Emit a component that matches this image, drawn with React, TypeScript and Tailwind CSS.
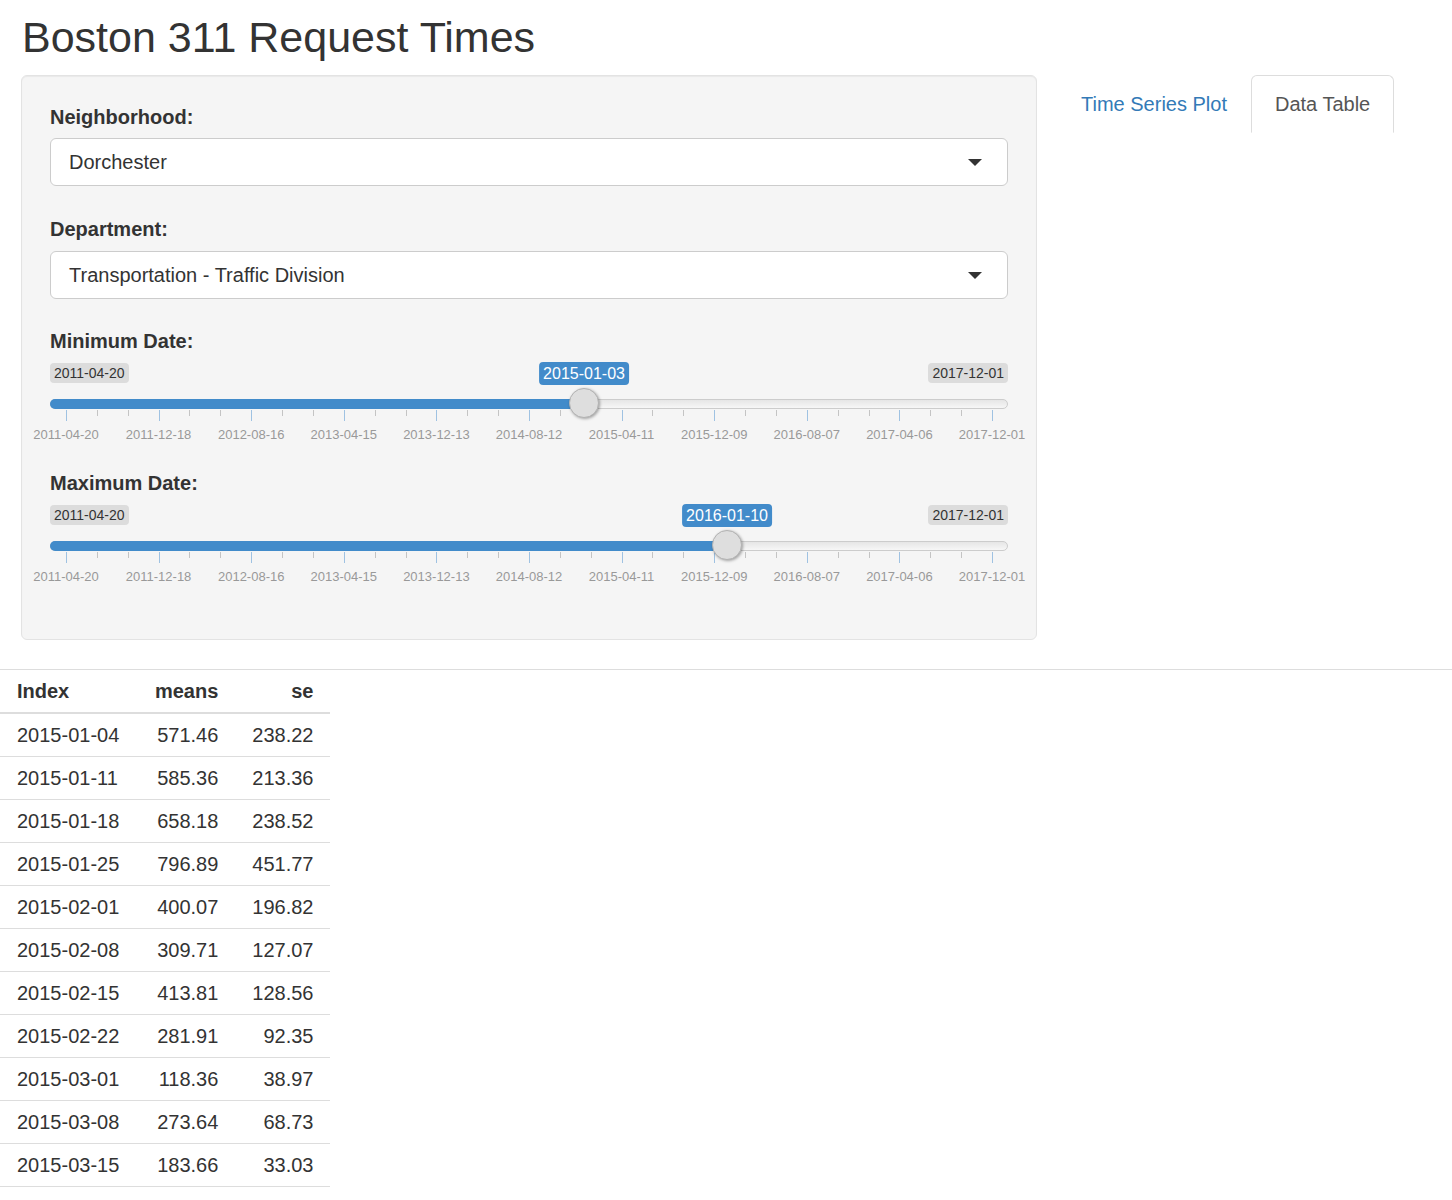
import React from 'react';

const gridLabels = [
  '2011-04-20',
  '2011-12-18',
  '2012-08-16',
  '2013-04-15',
  '2013-12-13',
  '2014-08-12',
  '2015-04-11',
  '2015-12-09',
  '2016-08-07',
  '2017-04-06',
  '2017-12-01',
];

const rows = [
  ['2015-01-04', '571.46', '238.22'],
  ['2015-01-11', '585.36', '213.36'],
  ['2015-01-18', '658.18', '238.52'],
  ['2015-01-25', '796.89', '451.77'],
  ['2015-02-01', '400.07', '196.82'],
  ['2015-02-08', '309.71', '127.07'],
  ['2015-02-15', '413.81', '128.56'],
  ['2015-02-22', '281.91', '92.35'],
  ['2015-03-01', '118.36', '38.97'],
  ['2015-03-08', '273.64', '68.73'],
  ['2015-03-15', '183.66', '33.03'],
  ['2015-03-22', '416.73', '80.18'],
];

// grid spans x = 16..942 inside the 957px slider
const GRID_START = 16;
const GRID_WIDTH = 926;

function SelectBox({ value }: { value: string }) {
  return (
    <div className="flex items-center justify-between h-[48px] bg-white border border-[#cccccc] rounded-[6px] pl-[18px] pr-[25px]">
      <span className="text-[20px] leading-[28px] text-[#333]">{value}</span>
      <span className="w-0 h-0 border-x-[7px] border-x-transparent border-t-[7px] border-t-[#333]" />
    </div>
  );
}

function DateSlider({ value, handleX }: { value: string; handleX: number }) {
  const ticks = Array.from({ length: 31 }, (_, i) => i);
  return (
    <div className="relative h-[89px] w-full">
      {/* min / max labels */}
      <div className="flex justify-between pt-[8px]">
        <span className="h-[20px] leading-[20px] px-[4px] rounded-[4px] bg-black/10 text-[14px] text-[#333]">
          2011-04-20
        </span>
        <span className="h-[20px] leading-[20px] px-[4px] rounded-[4px] bg-black/10 text-[14px] text-[#333]">
          2017-12-01
        </span>
      </div>

      {/* track */}
      <div className="relative mt-[16px] h-[10px] rounded-full border border-[#cccccc] bg-[linear-gradient(to_bottom,#dddddd_-50%,#ffffff_150%)]">
        <div
          className="absolute -left-px -top-px h-[10px] rounded-l-full bg-[#428bca]"
          style={{ width: handleX }}
        />
      </div>

      {/* grid ticks */}
      {ticks.map((i) => {
        const big = i % 3 === 0;
        return (
          <span
            key={i}
            className={
              big
                ? 'absolute top-[55px] w-px h-[11px] bg-[#9fc2e2]'
                : 'absolute top-[55px] w-px h-[6px] bg-[#c4c4c4]'
            }
            style={{ left: GRID_START + (i * GRID_WIDTH) / 30 }}
          />
        );
      })}
      {gridLabels.map((label, i) => (
        <span
          key={label}
          className="absolute top-[72px] h-[16px] leading-[16px] -translate-x-1/2 text-[13px] text-[#999] whitespace-nowrap"
          style={{ left: GRID_START + (i * GRID_WIDTH) / 10 }}
        >
          {label}
        </span>
      ))}

      {/* value label + handle */}
      <span
        className="absolute top-[7px] h-[23px] leading-[23px] px-[4px] -translate-x-1/2 rounded-[4px] bg-[#428bca] text-white text-[16px] whitespace-nowrap"
        style={{ left: handleX }}
      >
        {value}
      </span>
      <span
        className="absolute top-[33px] w-[30px] h-[30px] -ml-[15px] rounded-full bg-[#dedede] border border-[#b3b3b3] shadow-[1px_1px_3px_rgba(0,0,0,0.35)]"
        style={{ left: handleX }}
      />
    </div>
  );
}

export default function App() {
  return (
    <div className="min-h-[1200px] bg-white text-[#333] font-['Liberation_Sans',Arial,sans-serif]">
      <h2 className="mt-[13px] ml-[22px] h-[48px] leading-[48px] text-[43px] font-normal">
        Boston 311 Request Times
      </h2>

      <div className="flex items-start mt-[14px]">
        {/* Sidebar well */}
        <div className="ml-[21px] w-[1016px] bg-[#f5f5f5] border border-[#e3e3e3] rounded-[6px] shadow-[inset_0_1px_1px_rgba(0,0,0,0.05)] pt-[27px] pb-[53px] px-[28px]">
          <div className="text-[20px] font-bold leading-[28px] mb-[7px]">Neighborhood:</div>
          <SelectBox value="Dorchester" />

          <div className="text-[20px] font-bold leading-[28px] mt-[29px] mb-[8px]">Department:</div>
          <SelectBox value="Transportation - Traffic Division" />

          <div className="text-[20px] font-bold leading-[28px] mt-[28px]">Minimum Date:</div>
          <DateSlider value="2015-01-03" handleX={534} />

          <div className="text-[20px] font-bold leading-[28px] mt-[25px]">Maximum Date:</div>
          <DateSlider value="2016-01-10" handleX={677} />
        </div>

        {/* Tabs */}
        <ul className="flex ml-[23px] text-[20px]">
          <li className="mr-[3px]">
            <span className="block h-[58px] leading-[58px] px-[21px] text-[#337ab7]">Time Series Plot</span>
          </li>
          <li>
            <span className="block h-[58px] leading-[56px] px-[23px] border border-[#dddddd] border-b-transparent rounded-t-[6px] bg-white text-[#555]">
              Data Table
            </span>
          </li>
        </ul>
      </div>

      <div className="mt-[29px] border-t border-[#dddddd]" />

      <table className="border-separate border-spacing-0 text-[20px] whitespace-nowrap">
        <thead>
          <tr>
            <th className="w-[136px] px-[17px] py-0 leading-[42px] text-left font-bold border-b-2 border-[#dddddd]">Index</th>
            <th className="w-[99px] px-[17px] py-0 leading-[42px] text-right font-bold border-b-2 border-[#dddddd]">means</th>
            <th className="w-[95px] px-[17px] py-0 leading-[42px] text-right font-bold border-b-2 border-[#dddddd]">se</th>
          </tr>
        </thead>
        <tbody>
          {rows.map((r) => (
            <tr key={r[0]}>
              <td className="px-[17px] py-0 leading-[42px] text-left border-b border-[#dddddd]">{r[0]}</td>
              <td className="px-[17px] py-0 leading-[42px] text-right border-b border-[#dddddd]">{r[1]}</td>
              <td className="px-[17px] py-0 leading-[42px] text-right border-b border-[#dddddd]">{r[2]}</td>
            </tr>
          ))}
        </tbody>
      </table>
    </div>
  );
}
